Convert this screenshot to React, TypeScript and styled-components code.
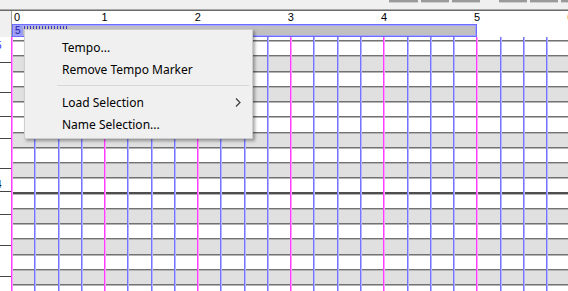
import React from 'react';
import styled, { createGlobalStyle } from 'styled-components';

const Global = createGlobalStyle`
  html, body { margin: 0; padding: 0; background: #f0f0f0; overflow: hidden; }
  #root { width: 568px; height: 291px; }
`;

const BAR = 93.12;
const BEAT = BAR / 4;

const Page = styled.div`
  position: relative;
  width: 568px;
  height: 291px;
  overflow: hidden;
  background: #f0f0f0;
  display: flex;
  flex-direction: column;
  font-family: "Noto Sans", sans-serif;
`;

const TopBar = styled.div`
  flex: none;
  height: 11px;
  box-sizing: border-box;
  display: flex;
  align-items: flex-start;
  padding-left: 389px;
  gap: 3px;
  border-bottom: 1px solid #6b6b6b;
  box-shadow: inset 0 -1px 0 #a9a9a9;
  overflow: hidden;
`;

const ToolButton = styled.div<{ $w: number; $gap?: number }>`
  flex: none;
  width: ${(p) => p.$w}px;
  height: 2px;
  margin-left: ${(p) => p.$gap ?? 0}px;
  background: #9a9a9a;
  border-bottom: 1px solid #cfcfcf;
`;

const Header = styled.div`
  flex: none;
  height: 26px;
  display: flex;
`;

const Corner = styled.div`
  flex: none;
  width: 11px;
  border-right: 1px solid #a0a0a0;
  background: #f0f0f0;
`;

const Ruler = styled.div`
  flex: 1;
  background: #fff;
  display: flex;
  flex-direction: column;
  overflow: hidden;
`;

const NumberRow = styled.div`
  position: relative;
  height: 13px;
  flex: none;
`;

const BarNumber = styled.span<{ $first?: boolean }>`
  position: absolute;
  top: 1px;
  font-family: "Liberation Sans", Arial, sans-serif;
  font-size: 11px;
  line-height: 11px;
  color: #000;
  transform: ${(p) => (p.$first ? 'none' : 'translateX(-50%)')};
`;

const TempoStrip = styled.div`
  height: 13px;
  flex: none;
  display: flex;
`;

const TempoBar = styled.div`
  flex: none;
  width: 465px;
  height: 13px;
  box-sizing: border-box;
  border: 1px solid #6c6cff;
  box-shadow: inset 0 0 0 1px #a4a4ff;
  background: #c0c0c0;
  display: flex;
  align-items: flex-start;
  padding: 1px 1px;
  gap: 1px;
`;

const TempoLabel = styled.span`
  font-family: "Liberation Sans", Arial, sans-serif;
  font-size: 10px;
  line-height: 9px;
  color: #1c1cb4;
  background: #9c9cf0;
  padding: 0 2px 0 1px;
`;

const TempoTicks = styled.div`
  width: 44px;
  height: 3px;
  background: repeating-linear-gradient(to right, #3434c8 0 1px, transparent 1px 3px);
`;

const Body = styled.div`
  flex: 1;
  display: flex;
  min-height: 0;
`;

const KeyColumn = styled.div`
  flex: none;
  width: 11px;
  background: #fff;
  display: flex;
  flex-direction: column;
  overflow: hidden;
`;

const Key = styled.div<{ $h: number; $pad: number }>`
  flex: none;
  height: ${(p) => p.$h}px;
  box-sizing: border-box;
  border-bottom: 1px solid #454545;
  padding-top: ${(p) => p.$pad}px;
`;

const KeyLabel = styled.span<{ $blue?: boolean }>`
  display: block;
  margin-left: -4px;
  font-family: "Liberation Sans", Arial, sans-serif;
  font-size: 10px;
  line-height: 8px;
  color: ${(p) => (p.$blue ? '#1a1aff' : '#000')};
`;

const Grid = styled.div`
  flex: 1;
  position: relative;
  overflow: hidden;
  display: flex;
  flex-direction: column;
`;

const NoteRow = styled.div<{ $gray: boolean; $h: number; $octave?: boolean; $top?: boolean }>`
  flex: none;
  height: ${(p) => p.$h}px;
  box-sizing: border-box;
  background: ${(p) => (p.$gray ? '#e0e0e0' : '#ffffff')};
  border-top: ${(p) => (p.$top ? 'none' : '1px solid #b4b4b4')};
  border-bottom: ${(p) => (p.$octave ? '2px solid #4e4e4e' : '1px solid #727272')};
`;

const BeatOverlay = styled.div`
  position: absolute;
  inset: 0;
  display: flex;
  pointer-events: none;
`;

const BeatColumn = styled.div<{ $bar: boolean }>`
  flex: none;
  width: ${BEAT}px;
  background: ${(p) =>
    p.$bar
      ? 'linear-gradient(to right, #ff3cff 0 1px, #ff9cff 1px 2px, transparent 2px)'
      : 'linear-gradient(to right, #7474ff 0 1px, #b4b4ff 1px 2px, transparent 2px)'};
`;

const Menu = styled.div`
  position: absolute;
  left: 24px;
  top: 29px;
  width: 229px;
  box-sizing: border-box;
  background: #f0f0f0;
  border: 1px solid #cdcdcd;
  box-shadow: 2px 2px 3px rgba(0, 0, 0, 0.35);
  padding: 6px 2px 3px 2px;
  font-family: "Noto Sans", sans-serif;
  font-size: 12px;
  color: #000;
`;

const MenuItem = styled.div`
  height: 22px;
  display: flex;
  align-items: center;
  padding-left: 35px;
  padding-right: 9px;
  white-space: nowrap;
`;

const ItemText = styled.span`
  flex: 1;
`;

const Separator = styled.div`
  height: 1px;
  margin: 5px 1px 5px 30px;
  background: #d7d7d7;
`;

const Chevron = () => (
  <svg width="6" height="9" viewBox="0 0 6 9">
    <path d="M1 0.5 L5 4.5 L1 8.5" fill="none" stroke="#3c3c3c" strokeWidth="1.2" />
  </svg>
);

const noteRows: { gray: boolean; octave?: boolean }[] = [
  { gray: false }, // A
  { gray: true }, // G#
  { gray: false }, // G
  { gray: true }, // F#
  { gray: false }, // F
  { gray: false }, // E
  { gray: true }, // D#
  { gray: false }, // D
  { gray: true }, // C#
  { gray: false, octave: true }, // C
  { gray: false }, // B
  { gray: true }, // A#
  { gray: false }, // A
  { gray: true }, // G#
  { gray: false }, // G
  { gray: true }, // F#
  { gray: false }, // F
];

const keys: { h: number; pad: number; label?: string; blue?: boolean }[] = [
  { h: 26, pad: 5, label: '5', blue: true },
  { h: 30, pad: 0 },
  { h: 24, pad: 0 },
  { h: 22, pad: 0 },
  { h: 30, pad: 0 },
  { h: 23, pad: 12, label: '4' },
  { h: 23, pad: 0 },
  { h: 31, pad: 0 },
  { h: 31, pad: 0 },
  { h: 30, pad: 0 },
];

const toolButtons = [
  { w: 29 },
  { w: 28 },
  { w: 28 },
  { w: 28, gap: 16 },
  { w: 28 },
  { w: 28 },
];

export default function App() {
  const beats = Array.from({ length: 26 }, (_, i) => i);
  const bars = Array.from({ length: 7 }, (_, i) => i);
  return (
    <>
      <Global />
      <Page>
        <TopBar>
          {toolButtons.map((b, i) => (
            <ToolButton key={i} $w={b.w} $gap={b.gap} />
          ))}
        </TopBar>
        <Header>
          <Corner />
          <Ruler>
            <NumberRow>
              {bars.map((b) => (
                <BarNumber
                  key={b}
                  $first={b === 0}
                  style={{ left: b === 0 ? 2 : 11 + b * BAR - 12 + 0.5 }}
                >
                  {b}
                </BarNumber>
              ))}
            </NumberRow>
            <TempoStrip>
              <TempoBar>
                <TempoLabel>5</TempoLabel>
                <TempoTicks />
              </TempoBar>
            </TempoStrip>
          </Ruler>
        </Header>
        <Body>
          <KeyColumn>
            {keys.map((k, i) => (
              <Key key={i} $h={k.h} $pad={k.pad}>
                {k.label && <KeyLabel $blue={k.blue}>{k.label}</KeyLabel>}
              </Key>
            ))}
          </KeyColumn>
          <Grid>
            <NoteRow $gray={false} $h={4} $top />
            {noteRows.map((r, i) => (
              <NoteRow key={i} $gray={r.gray} $octave={r.octave} $h={15.27} />
            ))}
            <BeatOverlay>
              {beats.map((b) => (
                <BeatColumn key={b} $bar={b % 4 === 0} />
              ))}
            </BeatOverlay>
          </Grid>
        </Body>
        <Menu>
          <MenuItem>
            <ItemText>Tempo...</ItemText>
          </MenuItem>
          <MenuItem>
            <ItemText>Remove Tempo Marker</ItemText>
          </MenuItem>
          <Separator />
          <MenuItem>
            <ItemText>Load Selection</ItemText>
            <Chevron />
          </MenuItem>
          <MenuItem>
            <ItemText>Name Selection...</ItemText>
          </MenuItem>
        </Menu>
      </Page>
    </>
  );
}
